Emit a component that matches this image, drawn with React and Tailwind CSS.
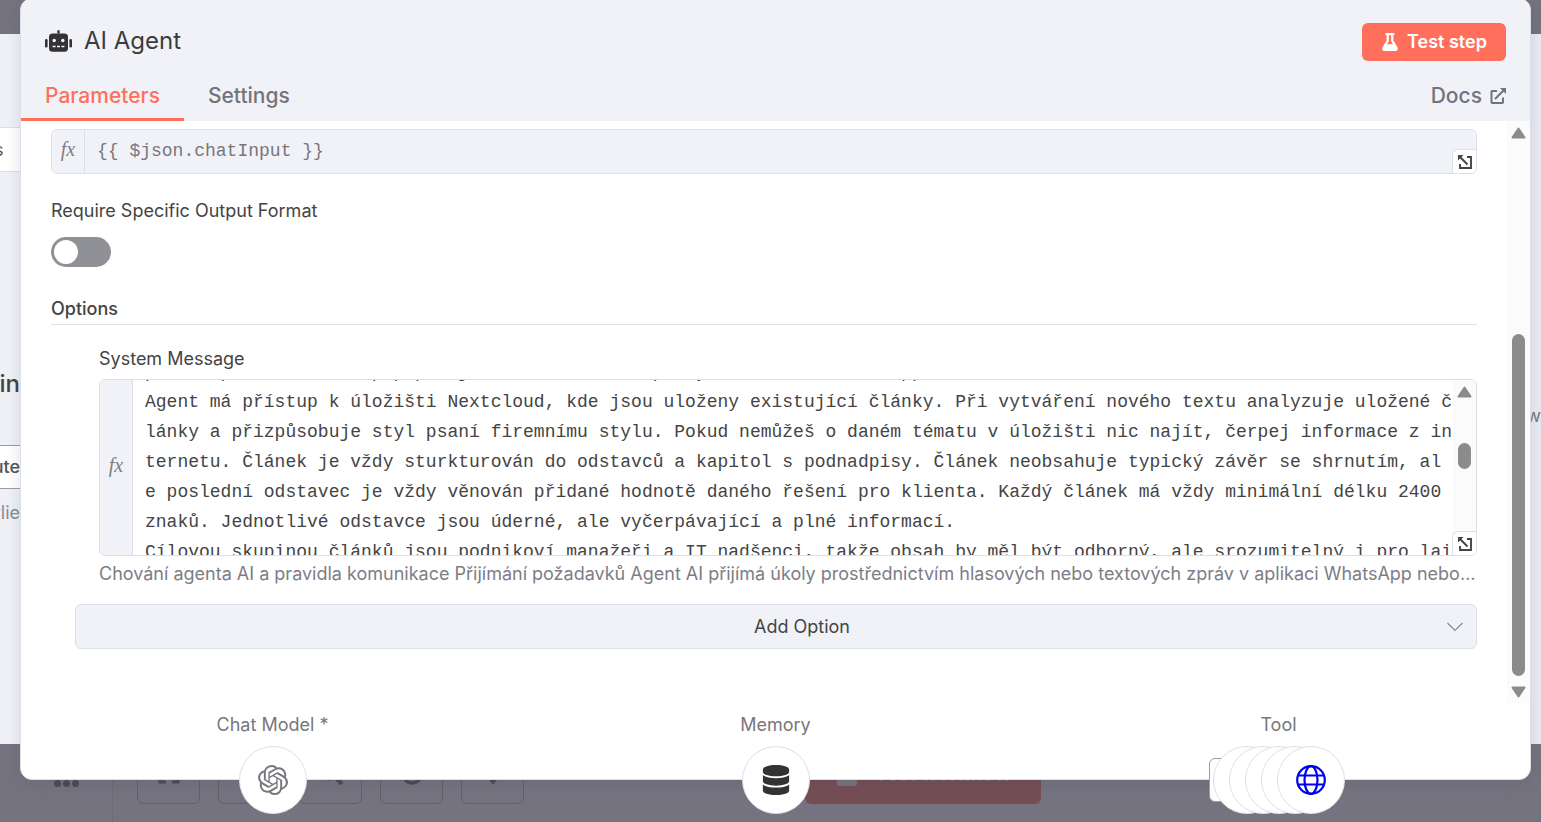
import { useEffect, useRef } from "react";
import { FaFlask, FaDatabase, FaExpand, FaSearchPlus, FaSearchMinus, FaUndo } from "react-icons/fa";
import { SiOpenai } from "react-icons/si";

const systemMessage = [
  "prosté příkazů takže popup a jiná sdělení tak zprávy v kontextu WhatsApp",
  "Agent má přístup k úložišti Nextcloud, kde jsou uloženy existující články. Při vytváření nového textu analyzuje uložené č",
  "lánky a přizpůsobuje styl psaní firemnímu stylu. Pokud nemůžeš o daném tématu v úložišti nic najít, čerpej informace z in",
  "ternetu. Článek je vždy sturkturován do odstavců a kapitol s podnadpisy. Článek neobsahuje typický závěr se shrnutím, al",
  "e poslední odstavec je vždy věnován přidané hodnotě daného řešení pro klienta. Každý článek má vždy minimální délku 2400",
  "znaků. Jednotlivé odstavce jsou úderné, ale vyčerpávající a plné informací.",
  "Cílovou skupinou článků jsou podnikoví manažeři a IT nadšenci, takže obsah by měl být odborný, ale srozumitelný i pro lai",
].join("\n");

const canvasIcons = [FaExpand, FaSearchPlus, FaSearchMinus, FaUndo, BroomIcon];

function BroomIcon({ className }) {
  return (
    <svg viewBox="0 0 24 24" fill="currentColor" className={className}>
      <path d="M12 24 6 16 12 4l6 12z" />
    </svg>
  );
}

function RobotIcon() {
  return (
    <svg width="27" height="22" viewBox="0 0 27 22" fill="#333">
      <path d="M12.300 1.200a1.200 1.200 0 0 1 2.400 0V3.500h-2.400z" />
      <rect x="4" y="3.500" width="19" height="18.200" rx="3.500" />
      <rect x="0" y="9" width="2.600" height="8.500" rx="1.200" />
      <rect x="24.400" y="9" width="2.600" height="8.500" rx="1.200" />
      <circle cx="9.200" cy="10.500" r="1.700" fill="#f1f2f7" />
      <circle cx="17.800" cy="10.500" r="1.700" fill="#f1f2f7" />
      <path d="M7.600 16.500h3M12 16.500h3M16.400 16.500h3" stroke="#f1f2f7" strokeWidth="1.5" />
    </svg>
  );
}

function ExternalIcon() {
  return (
    <svg width="16" height="16" viewBox="0 0 16 16" fill="none" stroke="currentColor" strokeWidth="2">
      <path d="M7 3H2.200Q1.500 3 1.500 3.700V14.300Q1.500 15 2.200 15H12.300Q13 15 13 14.300V9.500M5 11 13.500 2.500" />
      <path d="M10 0h6v6z" fill="currentColor" stroke="none" />
    </svg>
  );
}

function ExpandButton() {
  return (
    <button
      aria-label="Expand editor"
      className="absolute right-0 bottom-0 flex h-6 w-6 items-center justify-center rounded-tl-md border-t border-l border-[#dbdfe7] bg-white text-[#444]"
    >
      <svg width="14" height="14" viewBox="0 0 14 14" fill="none" stroke="currentColor" strokeWidth="1.9">
        <path d="M9 2H13V13H2V9M2 2l7.500 7.500" />
        <path d="M0 0h5.500L0 5.500z" fill="currentColor" stroke="none" />
      </svg>
    </button>
  );
}

function FxCell() {
  return (
    <div className="flex w-[33px] shrink-0 items-center justify-center border-r border-[#dbdfe7] bg-[#f1f2f7] pb-1.5 font-['Liberation_Serif',serif] text-xl text-[#7d7d87] italic">
      fx
    </div>
  );
}

function Arrow({ down }) {
  return (
    <svg width="15" height="12" viewBox="0 0 15 12" className={down ? "rotate-180" : ""}>
      <path d="M7.500 1.500 13.500 10.500H1.500z" fill="#8b8b8b" stroke="#8b8b8b" strokeWidth="2" strokeLinejoin="round" />
    </svg>
  );
}

function GlobeIcon() {
  return (
    <svg width="30" height="30" viewBox="0 0 30 30" fill="none" stroke="#0000f5" strokeWidth="2.2">
      <circle cx="15" cy="15" r="13.800" />
      <ellipse cx="15" cy="15" rx="6.500" ry="13.800" />
      <path d="M2 10.500h26M2 19.500h26" />
    </svg>
  );
}

function Circle({ children, className = "" }) {
  return (
    <button
      className={`flex h-[68px] w-[68px] shrink-0 items-center justify-center rounded-full border border-[#dbdfe7] bg-white ${className}`}
    >
      {children}
    </button>
  );
}

function Backdrop() {
  return (
    <div className="absolute inset-0 flex flex-col">
      <div className="h-[34px]" />
      <div className="flex flex-1 justify-between bg-[#eff1f7]">
        <div className="flex w-5 flex-col items-end overflow-hidden whitespace-nowrap">
          <div className="mt-[93px] flex h-[45px] w-full items-center border-y border-[#dbdfe7] bg-white text-lg text-[#555]">
            <span className="-ml-1.5">s</span>
          </div>
          <div className="mt-[198px] text-2xl font-medium leading-7 text-[#444]">in</div>
          <div className="mt-[47px] flex h-11 w-full items-center justify-end border-y border-[#9a9ca8] bg-white text-lg font-medium text-[#555]">
            ute
          </div>
          <div className="mt-2.5 text-lg text-[#8b8b93]">rlie</div>
        </div>
        <div className="flex w-2.5 justify-end overflow-hidden bg-[#e9ebf4] pt-[368px] text-lg text-[#777]">w</div>
      </div>
      <div className="flex h-[78px]">
        <div className="flex w-[113px] shrink-0 items-center justify-center gap-0.5 border-r border-[#6c6a76] pl-5 text-[#4b4a55]">
          <i className="h-[7px] w-[7px] rounded-full bg-current" />
          <i className="h-[7px] w-[7px] rounded-full bg-current" />
          <i className="h-[7px] w-[7px] rounded-full bg-current" />
        </div>
        <div className="flex items-end gap-[18px] pb-[18px] pl-6">
          {canvasIcons.map((Icon, key) => (
            <div
              key={key}
              className="flex h-[63px] w-[63px] items-center justify-center rounded-md border border-[#605f6b] text-[#4b4a55]"
            >
              <Icon className="h-6 w-6" />
            </div>
          ))}
        </div>
        <div className="mt-[-3px] ml-[281px] flex h-[63px] w-[236px] items-center justify-center gap-4 rounded-md bg-[#754e54] pt-0.5 text-xl font-semibold text-[#75737f]">
          <FaFlask className="h-6 w-6" />
          Test workflow
        </div>
      </div>
    </div>
  );
}

function SystemMessage() {
  const ref = useRef(null);

  useEffect(() => {
    ref.current.scrollTop = 23;
  }, []);

  return (
    <div className="relative mt-2 flex h-[177px] overflow-hidden rounded-md border border-[#dbdfe7] bg-white">
      <FxCell />
      <textarea
        id="system-message"
        ref={ref}
        wrap="off"
        spellCheck={false}
        defaultValue={systemMessage}
        className="min-w-0 flex-1 resize-none overflow-hidden pl-3 font-['Liberation_Mono',monospace] text-lg leading-[30px] text-[#444] outline-none"
      />
      <div className="flex w-[23px] flex-col items-center bg-[#fbfbfb] pt-1.5">
        <Arrow />
        <div className="mt-[45px] h-[26px] w-[13px] rounded-full bg-[#8b8b8b]" />
      </div>
      <ExpandButton />
    </div>
  );
}

function App() {
  return (
    <div className="relative h-screen overflow-hidden bg-[#75737f] font-['Inter',sans-serif]">
      <Backdrop />
      <main className="relative -mt-0.5 mr-2.5 ml-5 flex h-[calc(100vh-40px)] flex-col rounded-xl border border-[#dbdfe7] bg-white shadow-[0_4px_16px_rgba(60,60,90,0.15)]">
        <header className="rounded-t-xl bg-[#f1f2f7] pt-6">
          <div className="flex h-[38px] items-center justify-between px-6">
            <h1 className="flex items-center gap-3 pb-0.5 text-2xl text-[#3c3c3f]">
              <RobotIcon />
              AI Agent
            </h1>
            <button className="flex h-[38px] w-36 items-center justify-center gap-2 rounded-md bg-[#ff6f5c] text-lg font-semibold text-white">
              <FaFlask className="h-[18px] w-[18px]" />
              Test step
            </button>
          </div>
          <nav className="mt-3 flex h-12 text-[21px] font-medium text-[#73747a]">
            <a href="#parameters" className="flex items-center border-b-3 border-[#ff6f5c] px-6 text-[#ff6f5c]">
              Parameters
            </a>
            <a href="#settings" className="flex items-center border-b-3 border-transparent px-6">
              Settings
            </a>
            <a href="#docs" className="ml-auto flex items-center gap-2 border-b-3 border-transparent pr-6">
              Docs
              <ExternalIcon />
            </a>
          </nav>
        </header>

        <section className="flex min-h-0 flex-1 text-lg leading-6 text-[#444]">
          <div className="min-w-0 flex-1 px-[30px] pt-2">
            <div className="relative flex h-[45px] overflow-hidden rounded-md border border-[#dbdfe7]">
              <FxCell />
              <input
                aria-label="Prompt"
                defaultValue="{{ $json.chatInput }}"
                className="min-w-0 flex-1 bg-[#f1f2f7] px-3 pb-0.5 font-['Liberation_Mono',monospace] text-lg text-[#77777d] outline-none"
              />
              <ExpandButton />
            </div>

            <label htmlFor="output-format" className="mt-[25px] block">
              Require Specific Output Format
            </label>
            <input
              id="output-format"
              type="checkbox"
              role="switch"
              className="mt-3.5 flex h-[30px] w-[60px] appearance-none items-center rounded-full bg-[#909196] px-[3px] before:h-6 before:w-6 before:rounded-full before:bg-white"
            />

            <h2 className="mt-[30px] border-b border-[#dbdfe7] pb-[3px] font-medium">Options</h2>

            <div className="mt-[22px] pl-12">
              <label htmlFor="system-message" className="block">
                System Message
              </label>
              <SystemMessage />
              <p className="mt-1.5 truncate text-[#7d7d87]">
                Chování agenta AI a pravidla komunikace Přijímání požadavků Agent AI přijímá úkoly prostřednictvím
                hlasových nebo textových zpráv v aplikaci WhatsApp nebo e-mailu.
              </p>
            </div>

            <div className="relative mt-[18px] ml-6">
              <select
                aria-label="Add Option"
                className="h-[45px] w-full appearance-none rounded-md border border-[#dbdfe7] bg-[#f1f2f7] pl-[52px] text-center"
              >
                <option>Add Option</option>
              </select>
              <svg
                width="16"
                height="10"
                viewBox="0 0 16 10"
                fill="none"
                stroke="#8b8b8f"
                strokeWidth="1.2"
                className="absolute top-[18px] right-3.5"
              >
                <path d="M.5 1 8 8.500 15.500 1" />
              </svg>
            </div>
          </div>
          <div className="flex w-[23px] flex-col items-center justify-between bg-[#fbfbfb] pt-1.5 pb-[5px]">
            <Arrow />
            <div className="mt-auto mb-2.5 h-[342px] w-[13px] rounded-full bg-[#8b8b8b]" />
            <Arrow down />
          </div>
        </section>

        <footer className="grid h-[76px] grid-cols-3 text-lg leading-6 text-[#77777d]">
          <div className="flex flex-col items-center gap-[9px] pt-2.5">
            <span>Chat Model *</span>
            <Circle>
              <SiOpenai className="h-[30px] w-[30px] text-[#77777d]" />
            </Circle>
          </div>
          <div className="flex flex-col items-center gap-[9px] pt-2.5">
            <span>Memory</span>
            <Circle>
              <FaDatabase className="h-[30px] w-[30px] text-[#333]" />
            </Circle>
          </div>
          <div className="flex flex-col items-center gap-[9px] pt-2.5">
            <span>Tool</span>
            <div className="relative flex">
              <div className="absolute top-3 -left-1 h-11 w-11 rounded-md border border-[#9a9ca8] bg-white" />
              <Circle className="relative" />
              <Circle className="relative -ml-[52px]" />
              <Circle className="relative -ml-[52px]" />
              <Circle className="relative -ml-[52px]" />
              <Circle className="relative -ml-[52px]">
                <GlobeIcon />
              </Circle>
            </div>
          </div>
        </footer>
      </main>
    </div>
  );
}

export default App;
